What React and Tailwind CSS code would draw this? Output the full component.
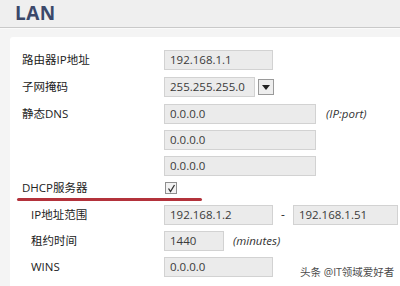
const font = { fontFamily: '"Open Sans", "Noto Sans CJK SC", sans-serif' }

const Field = ({ value, w = 'w-[109px]' }) => (
    <div className={`${w} h-[20px] bg-[#ebebeb] border border-[#d2d2d2] flex items-center pl-[5px] text-[11.5px] text-[#3a3a3a]`}>
        {value}
    </div>
)

const Row = ({ label, indent, children, h = 'h-[26px]' }) => (
    <div className={`flex items-center ${h}`}>
        <div className={`w-[154px] shrink-0 text-[11.5px] text-[#222] ${indent ? 'pl-[21px]' : 'pl-[12px]'}`}>{label}</div>
        <div className="flex items-center">{children}</div>
    </div>
)

const Hint = ({ children }) => (
    <span className="italic text-[11.5px] text-[#333]">{children}</span>
)

export default function App() {
    return (
        <div className="w-[400px] h-[286px] overflow-hidden bg-[#efefef] relative" style={font}>
            <div className="h-[27px] pl-[15px] flex items-center">
                <h1 className="text-[19px] font-bold text-[#3b486a] leading-none tracking-[0.5px]">LAN</h1>
            </div>
            <div className="h-[1px] bg-[#c9c9c9]" />
            <div className="h-[1px] bg-[#fafafa]" />
            <div className="bg-[#f4f4f4] pt-[8px] pl-[10px]">
                <div className="bg-white rounded-tl-[3px] pt-[10px] h-[260px]">
                    <Row label="路由器IP地址">
                        <Field value="192.168.1.1" />
                    </Row>
                    <Row label="子网掩码" h="h-[28px]">
                        <div className="flex items-center gap-[3px]">
                            <Field value="255.255.255.0" w="w-[91px]" />
                            <div className="w-[16px] h-[16px] bg-[#eeeeee] border border-[#9a9a9a] flex items-center justify-center">
                                <svg width="8" height="5" viewBox="0 0 8 5"><path d="M0 0h8L4 5z" fill="#222" /></svg>
                            </div>
                        </div>
                    </Row>
                    <Row label="静态DNS">
                        <div className="flex items-center gap-[10px]">
                            <Field value="0.0.0.0" w="w-[152px]" />
                            <Hint>(IP:port)</Hint>
                        </div>
                    </Row>
                    <Row label="">
                        <Field value="0.0.0.0" w="w-[152px]" />
                    </Row>
                    <Row label="">
                        <Field value="0.0.0.0" w="w-[152px]" />
                    </Row>
                    <Row label="DHCP服务器" h="h-[18px]">
                        <div className="w-[12px] h-[12px] border border-[#8f8f8f] bg-[#f2f2f2] flex items-center justify-center ml-[1px]">
                            <svg width="9" height="9" viewBox="0 0 9 9"><path d="M1.5 4.5l2 3 4-6.5" stroke="#333" strokeWidth="1.3" fill="none" /></svg>
                        </div>
                    </Row>
                    <div className="ml-[7px] w-[185px] h-[3px] bg-[#b3323b] rounded-full my-[1px]" />
                    <Row label="IP地址范围" indent>
                        <div className="flex items-center gap-[6px]">
                            <Field value="192.168.1.2" />
                            <span className="text-[12px] text-[#333] px-[2px]">-</span>
                            <Field value="192.168.1.51" w="w-[105px]" />
                        </div>
                    </Row>
                    <Row label="租约时间" indent>
                        <div className="flex items-center gap-[9px]">
                            <Field value="1440" w="w-[60px]" />
                            <Hint>(minutes)</Hint>
                        </div>
                    </Row>
                    <Row label="WINS" indent>
                        <Field value="0.0.0.0" />
                    </Row>
                </div>
            </div>
            <div className="absolute left-[300px] top-[265px] text-[10.5px] text-[#4a4a4a]">头条 @IT领域爱好者</div>
        </div>
    )
}
